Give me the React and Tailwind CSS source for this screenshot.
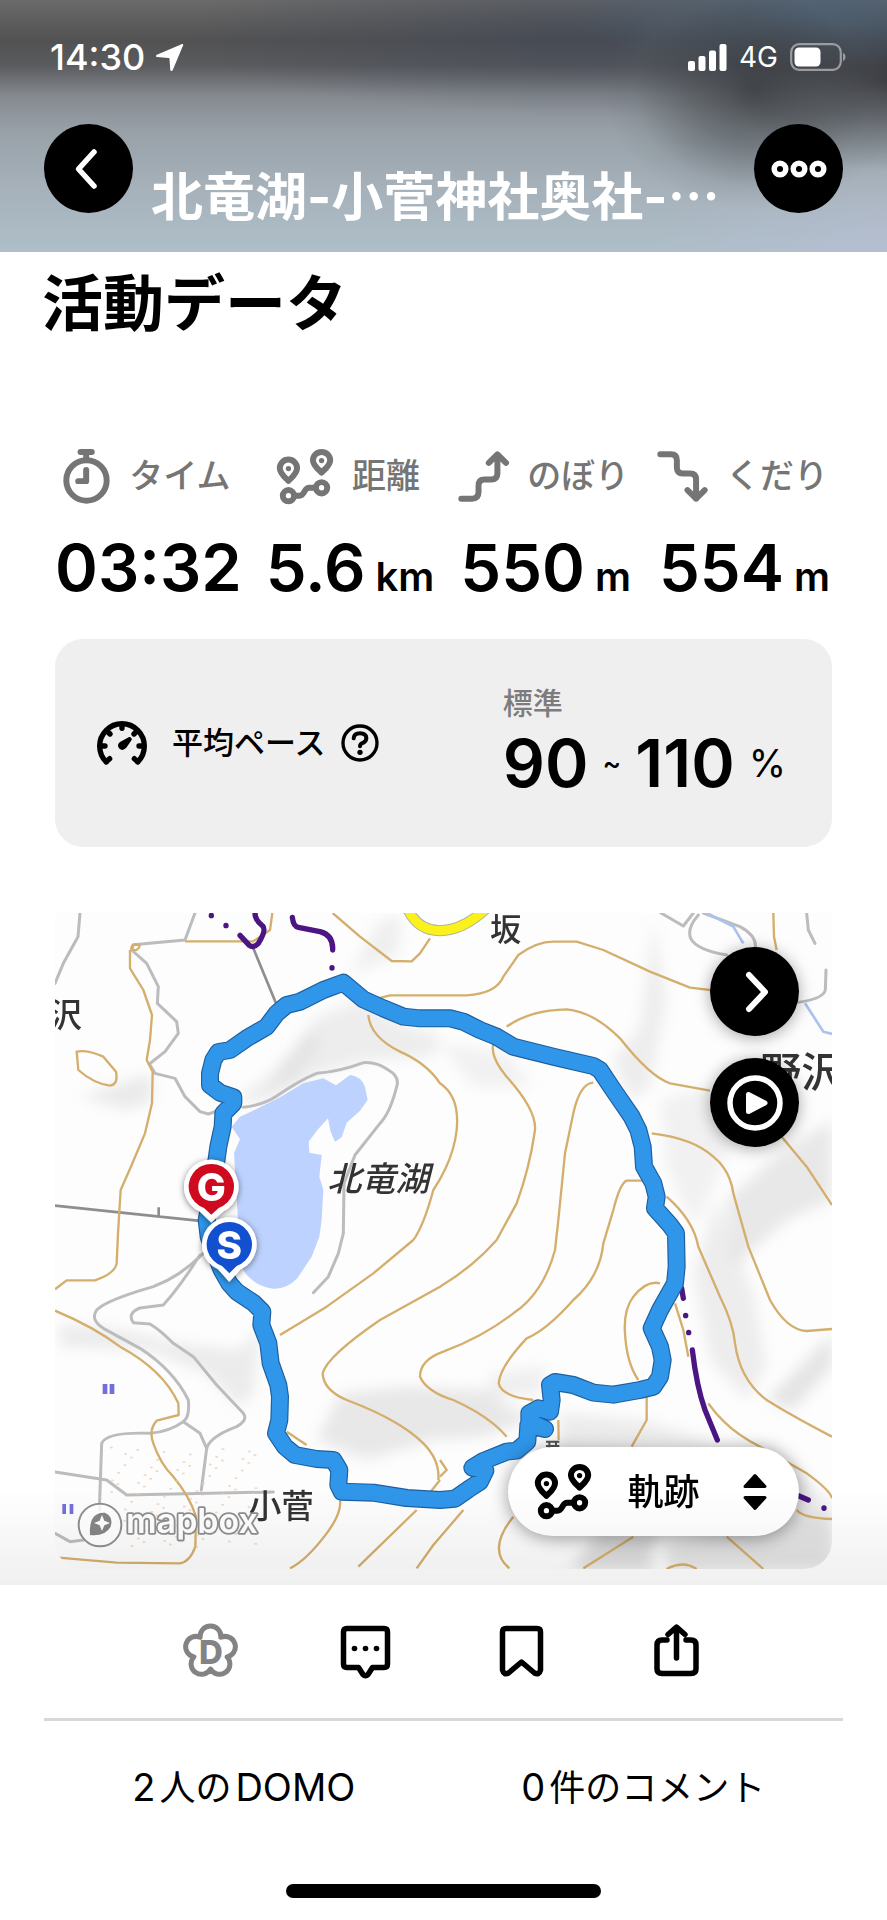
import React from "react";

function RouteIcon({ className }) {
  return (
    <svg viewBox="700 50 174 172" className={className} fill="none" stroke="currentColor" strokeWidth="18" strokeLinecap="round" strokeLinejoin="round" aria-hidden="true">
      <path d="M737 149C728 140 711 127 711 110a26 25 0 0 1 52 0C763 127 746 140 737 149Z" />
      <path d="M837 124C828 115 811 103 811 87a26 25 0 0 1 52 0C863 103 846 115 837 124Z" />
      <circle cx="737" cy="112" r="8" fill="currentColor" stroke="none" />
      <circle cx="837" cy="88" r="8" fill="currentColor" stroke="none" />
      <circle cx="737" cy="194" r="17" />
      <circle cx="837" cy="170" r="17" />
      <path d="M756 194h14c18 0 12-24 30-24h18" />
    </svg>
  );
}

function TimerIcon({ className }) {
  return (
    <svg viewBox="76 50 148 172" className={className} fill="none" stroke="currentColor" strokeWidth="18" strokeLinecap="round" strokeLinejoin="round" aria-hidden="true">
      <circle cx="150" cy="148" r="61" />
      <path d="M132 62h34M149 62v20M149 116v34h-24" />
    </svg>
  );
}

function ClimbIcon({ className }) {
  return (
    <svg viewBox="50 60 154 154" className={className} fill="none" stroke="currentColor" strokeWidth="18" strokeLinecap="round" strokeLinejoin="round" aria-hidden="true">
      <path d="M60 204H92Q112 204 112 184V165Q112 146 130 146H150Q169 146 169 128V72M143 96L169 70L195 96" />
    </svg>
  );
}

function DescendIcon({ className }) {
  return (
    <svg viewBox="646 60 154 154" className={className} fill="none" stroke="currentColor" strokeWidth="18" strokeLinecap="round" strokeLinejoin="round" aria-hidden="true">
      <path d="M656 70H688Q706 70 706 88V110Q706 128 724 128H746Q764 128 764 146V204M738 178L764 204L790 178" />
    </svg>
  );
}

function GaugeIcon({ className }) {
  return (
    <svg viewBox="48 52 156 138" className={className} fill="none" stroke="currentColor" strokeLinecap="round" strokeLinejoin="round" aria-hidden="true">
      <path strokeWidth="16" d="M79 178A67 67 0 1 1 173 178" />
      <path strokeWidth="16" d="M126 68v9M84 88l6 6M168 88l-6 6M66 130h9M186 130h-9M80 176l9-8M172 176l-9-8" />
      <path strokeWidth="7" fill="currentColor" d="M145 108q5-4 7 2l-16 23q-8 9-16 2q-6-8 3-15z" />
    </svg>
  );
}

function HelpIcon({ className }) {
  return (
    <svg viewBox="788 73 114 114" className={className} fill="none" stroke="currentColor" strokeLinecap="round" strokeLinejoin="round" aria-hidden="true">
      <circle cx="845" cy="130" r="51" strokeWidth="10" />
      <path strokeWidth="12" d="M826 116q1-15 19-15q18 0 19 14q0 9-9 14q-10 4-10 11" />
      <circle cx="845" cy="158" r="8" fill="currentColor" stroke="none" />
    </svg>
  );
}

function StatusBar() {
  return (
    <div className="flex h-28 items-center justify-between pt-[2px] pr-10 pl-[50px] text-white">
      <div className="flex items-center gap-[10px]">
        <span className="text-[36px] leading-10 font-medium">14:30</span>
        <svg viewBox="0 0 30 30" className="size-[29px]" fill="currentColor" aria-label="位置情報">
          <path d="M27.5 1.2c1.3-.6 2 .2 1.500 1.500L18.400 28c-.6 1.400-2.400 1.300-2.600-.3L15 16.500c0-.8-.2-1-1-1L2.300 14.600c-1.600-.2-1.800-1.800-.4-2.500z" />
        </svg>
      </div>
      <div className="flex items-center gap-3">
        <svg viewBox="0 0 39 27" className="h-[27px] w-[39px]" fill="currentColor" aria-label="電波">
          <rect x="0" y="17" width="7" height="10" rx="2" />
          <rect x="10.500" y="12" width="7" height="15" rx="2" />
          <rect x="21" y="6.500" width="7" height="20.500" rx="2" />
          <rect x="31.500" y="0" width="7" height="27" rx="2" />
        </svg>
        <span className="text-[28px] leading-10">4G</span>
        <svg viewBox="0 0 57 28" className="h-7 w-[57px]" fill="none" aria-label="バッテリー">
          <rect x="1.200" y="1.200" width="49.600" height="25.600" rx="8" stroke="#9a9ca0" strokeWidth="2.200" />
          <rect x="4.500" y="4.500" width="26" height="19" rx="4.500" fill="#fff" />
          <path d="M53 10v8c3-.8 3.500-7 0-8z" fill="#9a9ca0" />
        </svg>
      </div>
    </div>
  );
}

function Header() {
  return (
    <header className="h-[252px] bg-[radial-gradient(ellipse_150px_120px_at_85%_36%,rgba(52,55,59,0.75),rgba(62,66,70,0.45)_45%,rgba(90,96,102,0.12)_80%,transparent),radial-gradient(ellipse_260px_60px_at_92%_4%,rgba(74,98,122,0.75),transparent),radial-gradient(ellipse_400px_80px_at_66%_14%,rgba(60,68,84,0.55),transparent),radial-gradient(ellipse_240px_90px_at_100%_100%,rgba(184,190,212,0.7),transparent),radial-gradient(ellipse_160px_90px_at_100%_32%,rgba(42,42,46,0.75),transparent),linear-gradient(180deg,#6a6a6a_0%,#525253_16%,#5a5b5e_26%,#85898f_38%,#98a1a8_52%,#a6b1ba_75%,#aebfc9_100%)]">
      <StatusBar />
      <div className="flex items-start gap-[18px] px-11 pt-3">
        <button type="button" aria-label="戻る" className="flex size-[89px] shrink-0 items-center justify-center rounded-full bg-black text-white">
          <svg viewBox="3 0 24 42" className="h-[42px] w-6 overflow-visible" fill="none" stroke="currentColor" strokeWidth="5.500" strokeLinecap="round" strokeLinejoin="round">
            <path d="M20 4L4.500 21L20 38" />
          </svg>
        </button>
        <h1 className="min-w-0 flex-1 truncate pt-9 text-[52px] leading-[76px] font-bold text-white">北竜湖-小菅神社奥社-⋯</h1>
        <button type="button" aria-label="メニュー" className="flex size-[89px] shrink-0 items-center justify-center rounded-full bg-black text-white">
          <svg viewBox="0 0 56 18" className="h-[18px] w-14" fill="none" stroke="currentColor" strokeWidth="5.500">
            <circle cx="9" cy="9" r="5.800" />
            <circle cx="28" cy="9" r="5.800" />
            <circle cx="47" cy="9" r="5.800" />
          </svg>
        </button>
      </div>
    </header>
  );
}

function Stat({ icon, label, value, unit }) {
  return (
    <div className="flex flex-col items-center">
      <dt className="flex h-14 items-center gap-[18px] pr-1 text-[34px] leading-10 font-medium text-[#757575]">
        {icon}
        {label}
      </dt>
      <dd className="mt-6 flex items-baseline gap-[10px] text-[65px] leading-[80px] font-semibold text-black">
        {value}
        {unit && <span className="text-[40px]">{unit}</span>}
      </dd>
    </div>
  );
}

const ROUTE =
  "M520 850L500 960L506 1010L545 1110L568 1150L590 1175L640 1208L667 1235L664 1275L685 1330L692 1390L715 1455L720 1490L718 1560L708 1600L735 1640L765 1665L830 1677L880 1680L898 1710L895 1755L905 1775L1000 1778L1100 1794L1200 1800L1245 1796L1285 1768L1320 1745L1336 1712L1297 1703L1330 1683L1400 1655L1430 1652L1462 1625L1465 1575L1515 1587L1468 1565L1468 1540L1495 1525L1530 1535L1535 1500L1530 1455L1545 1446L1600 1455L1660 1478L1720 1484L1800 1470L1840 1460L1860 1430L1868 1380L1860 1340L1835 1285L1860 1230L1905 1150L1910 1100L1908 1000L1890 975L1845 925L1850 890L1840 850L1812 800L1808 740L1795 690L1775 650L1720 570L1680 510L1660 498L1540 470L1420 440L1370 410L1320 390L1270 365L1230 355L1140 355L1090 350L1030 325L970 298L910 248L850 270L780 305L740 315L710 340L680 380L620 415L570 450L535 456L520 480L510 520L510 555L540 578L580 592L580 610L550 640L548 680L535 740L520 850";

function MapDrawing() {
  return (
    <svg viewBox="45 39 2331 1968" className="block h-auto w-full rounded-b-[28px] bg-[#fdfdfd]" role="img" aria-label="活動ルートの地図">
      <defs>
        <filter id="soft" x="-30%" y="-30%" width="160%" height="160%">
          <feGaussianBlur stdDeviation="20" />
        </filter>
        <filter id="pin" x="-50%" y="-50%" width="200%" height="200%">
          <feDropShadow dx="0" dy="4" stdDeviation="10" floodOpacity="0.5" />
        </filter>
      </defs>

      <g fill="#b9b9bc" opacity="0.5" filter="url(#soft)">
        <path d="M600 580L700 530L830 350L960 300L1100 380L1200 400L1180 470L980 480L840 520L690 600L620 610Z" opacity=".45" />
        <path d="M660 560L800 400L850 420L760 540Z" opacity=".5" />
        <path d="M120 590L330 520L340 600L260 630Z" opacity=".55" />
        <path d="M930 220L1020 60L1090 50L1070 170Z" opacity=".4" />
        <path d="M1200 430L1400 460L1480 560L1300 560Z" opacity=".35" />
        <path d="M1720 480L1800 380L1840 60L1880 300L1830 560L1770 600Z" opacity=".45" />
        <path d="M1860 600L2010 560L2080 700L2020 860L1960 980L1880 800Z" opacity=".35" />
        <path d="M2060 900L2220 760L2376 660L2376 900L2240 960L2080 1100Z" opacity=".6" />
        <path d="M1960 1120L2030 900L2140 1180L2180 1400L2120 1500L2010 1380Z" opacity=".45" />
        <path d="M2180 1500L2376 1300L2376 1400L2260 1530Z" opacity=".7" />
        <path d="M60 1270L250 1290L420 1330L600 1350L660 1280L640 1480L600 1520L500 1420L320 1350L60 1340Z" opacity=".5" />
        <path d="M830 1620L900 1480L1080 1460L1320 1470L1480 1560L1330 1610L1180 1620L980 1680Z" opacity=".6" />
        <path d="M1560 1540L1800 1560L2020 1620L1560 1640Z" opacity=".5" />
        <path d="M1360 1420L1520 1400L1500 1480L1320 1500Z" opacity=".4" />
        <path d="M1590 2007L1680 1900L1850 1900L1830 2007Z" />
        <path d="M1860 1940L2000 1900L2150 1860L2376 1840L2376 2007H1900Z" opacity=".8" />
        <path d="M2120 1640L2200 1640L2376 1820L2300 1880L2180 1850Z" opacity=".5" />
      </g>

      <path fill="#bdd2fe" d="M600 650L660 622L720 592L790 550L850 535L888 556L930 525Q965 530 975 560L983 600L960 632L920 668L905 712L885 725L872 695L864 655L832 690L806 725L808 758L845 765L838 830L850 870L845 960L838 1010L815 1070L772 1135Q740 1168 700 1166Q640 1158 610 1110L590 1060L575 1000L594 960L588 860L582 760L600 718L575 680Z" />

      <g fill="none" stroke="#bcbcbf" strokeWidth="9" strokeLinejoin="round" strokeLinecap="round">
        <path d="M120 39L114 110L70 190L45 250" />
        <path d="M465 39L435 120L280 134L275 150L320 190L355 260L352 310L410 365L415 400L375 455L328 492L345 520L405 535L435 590L480 635L505 642L540 630" />
        <path d="M610 622Q670 615 710 588Q780 540 830 520Q900 515 970 488Q1010 485 1045 510Q1080 530 1070 560Q1050 640 1020 670L945 765L912 850L910 1000L895 1060L865 1130L820 1178" />
        <path d="M490 1060Q420 1130 340 1160Q200 1200 170 1230Q150 1260 190 1285L300 1345Q400 1410 445 1500Q450 1550 430 1565Q390 1595 330 1600Q200 1595 185 1630L178 1830" />
        <path d="M480 1065Q420 1160 370 1215L300 1224Q260 1240 280 1268L330 1272Q360 1290 400 1330L460 1370L530 1455L610 1540Q625 1560 590 1580Q510 1610 500 1645L484 1770" />
        <path d="M430 1565L480 1600L500 1645" />
        <path d="M45 1716L200 1740L260 1785L700 1776" />
        <path d="M45 1900L90 1925L130 1920" />
        <path d="M1863 39L1930 78L1960 39M1975 45Q1940 85 1952 115Q1970 150 2060 165M1990 39L2100 80Q2155 110 2145 150" />
        <path d="M2300 39L2305 90L2325 130M2358 210L2356 270Q2350 300 2250 310" />
      </g>
      <path fill="none" stroke="#8e8e8e" strokeWidth="8" d="M640 145L708 310M45 917L530 968M356 922v28" />
      <path fill="none" stroke="#a9c2ee" strokeWidth="8" d="M2000 39L2080 80L2110 130M2295 310L2350 395L2376 402" />

      <g fill="none" stroke="#d4ae6c" strokeWidth="7" strokeLinejoin="round">
        <path d="M697 39L690 90L640 124H435M300 136q-25-8-26 10q18 12 26-10M270 150V205L310 270L336 345L330 420L320 480L338 515L336 610L315 700L275 795L242 870L234 1000L230 1090Q225 1120 165 1141H80L45 1168" />
        <path d="M110 455Q140 448 190 470L228 515Q235 555 210 557Q160 550 115 510Z" />
        <path d="M45 1232Q160 1280 240 1340Q370 1410 415 1510L416 1545L350 1562Q325 1590 340 1630Q360 1690 400 1730Q450 1790 468 1850L466 1940Q450 1985 420 1990L230 1988L55 1973" />
        <path d="M878 39L960 110L1055 183L1115 184L1140 160L1170 115" />
        <path d="M1015 295L1050 286H1280Q1370 280 1390 230L1435 165Q1490 125 1540 125H1610L1690 150L1830 215L1950 263L2010 270" />
        <path d="M985 345Q990 410 1080 455Q1160 490 1200 550Q1260 590 1250 690Q1240 780 1180 870Q1150 980 1120 1020" />
        <path d="M1400 380Q1470 330 1580 328Q1660 335 1740 415Q1830 530 1890 550L2010 572" />
        <path d="M1360 430Q1350 470 1400 530Q1490 630 1485 690Q1470 800 1430 910L1370 1020Q1300 1100 1200 1160L1020 1260Q860 1370 848 1420Q850 1470 920 1500Q1080 1560 1150 1630Q1200 1680 1195 1740" />
        <path d="M1120 1020L1000 1120L860 1220L720 1305" />
        <path d="M1660 548Q1620 550 1600 640L1575 760L1555 960L1545 1050Q1510 1180 1420 1240Q1330 1310 1210 1355Q1140 1380 1140 1430Q1160 1475 1240 1500Q1350 1550 1400 1610" />
        <path d="M1810 842H1760Q1740 850 1720 930L1690 1030Q1680 1130 1600 1200Q1520 1290 1460 1315Q1380 1400 1376 1450Q1385 1490 1480 1500M1555 1560L1556 1620" />
        <path d="M1860 1150Q1820 1140 1780 1190Q1750 1230 1755 1300Q1760 1390 1795 1440M1820 1490V1560L1775 1640" />
        <path d="M1835 700Q1960 715 2020 770Q2070 810 2080 880L2125 1040L2190 1200Q2240 1290 2300 1293L2376 1287" />
        <path d="M1880 890Q1960 960 1975 1040L2040 1190Q2080 1270 2085 1330Q2100 1440 2180 1500Q2260 1550 2376 1610" />
        <path d="M2225 710L2300 800L2376 915M2200 39L2202 110L2210 150M1905 1210L1930 1290L1945 1370" />
        <path d="M2005 1510Q2060 1590 2160 1640L2300 1720Q2370 1770 2376 1795M2270 1830Q2290 1855 2376 1857" />
        <path d="M740 1595L800 1635M900 1800Q905 1840 860 1900Q800 1980 750 2005M1130 1830L955 2000M1200 1740L1160 1790M1270 1830L1180 1935L1130 2005M1420 1850Q1340 1950 1408 2005M1780 1910L1630 2005M2060 1910L2170 2007M1880 2007Q1930 1980 1970 2007M1200 1680L1220 1710L1200 1730" />
      </g>

      <g fill="#eec9a4" opacity=".7">
        {[...Array(90).keys()].map((i) => (
          <rect key={i} x={210 + ((i * 137) % 450)} y={1640 + ((i * 71) % 300)} width="8" height="5" />
        ))}
      </g>

      <path d="M1100 20Q1130 92 1200 92Q1270 92 1345 20" fill="none" stroke="#b4b49c" strokeWidth="33" />
      <path d="M1100 20Q1130 92 1200 92Q1270 92 1345 20" fill="none" stroke="#fbf21c" strokeWidth="27" />

      <g fill="none" stroke="#4b1583" strokeWidth="16" strokeLinecap="round" strokeLinejoin="round">
        <path d="M645 39Q645 60 668 78Q680 90 655 130Q640 145 628 136L600 106M757 52Q760 80 775 82L840 95Q880 105 878 150M876 203v1M514 46v1M558 76v1" />
        <path d="M1925 1165L1930 1195M1937 1246v1M1946 1297v1M1957 1350Q1970 1460 1995 1530L2032 1620" />
        <path d="M2270 1785L2305 1800M2352 1824v1" />
      </g>

      <g fill="#5a55d6" opacity=".85">
        <rect x="188" y="1452" width="14" height="30" />
        <rect x="209" y="1452" width="14" height="30" />
        <rect x="67" y="1812" width="11" height="30" />
        <rect x="89" y="1812" width="11" height="30" />
      </g>
      <path fill="none" stroke="#555" strokeWidth="6" d="M1518 1625h40M1518 1638h40M1528 1622v30M1548 1622v30" />

      <g fill="#333" className="font-medium">
        <text x="28" y="380" fontSize="98">沢</text>
        <text x="1350" y="122" fontSize="94">坂</text>
        <text x="862" y="874" fontSize="102" fontStyle="italic">北竜湖</text>
        <text x="2160" y="560" fontSize="124">野沢</text>
        <text x="626" y="1854" fontSize="98">小菅</text>
      </g>

      <g fill="none" strokeLinejoin="round" strokeLinecap="round">
        <path d={ROUTE} stroke="#1d5f9f" strokeWidth="54" />
        <path d={ROUTE} stroke="#3096ea" strokeWidth="47" />
      </g>

      <g filter="url(#pin)">
        <path d="M514 968L480 935A82 82 0 1 1 548 935Z" fill="#fff" />
      </g>
      <path d="M514 944L492 924A68 68 0 1 1 536 924Z" fill="#cf0a1e" />
      <text x="514" y="902" fontSize="116" textAnchor="middle" className="font-extrabold" fill="#fff">G</text>
      <g filter="url(#pin)">
        <path d="M568 1146L534 1108A82 82 0 1 1 602 1108Z" fill="#fff" />
      </g>
      <path d="M568 1120L546 1098A68 68 0 1 1 590 1098Z" fill="#1250cf" />
      <text x="568" y="1076" fontSize="116" textAnchor="middle" className="font-extrabold" fill="#fff">S</text>

      <g stroke="#8f8f8f" fill="#fff">
        <circle cx="180" cy="1875" r="64" strokeWidth="6" fillOpacity=".85" />
        <path d="M150 1905Q145 1835 195 1838Q222 1850 212 1880Q195 1910 150 1905Z" fill="#858585" stroke="none" />
        <path d="M186 1845l7 17 17 7-17 7-7 17-7-17-17-7 17-7z" stroke="none" />
        <text x="258" y="1900" fontSize="102" strokeWidth="11" paintOrder="stroke" strokeLinejoin="round" className="font-semibold">mapbox</text>
      </g>
    </svg>
  );
}

function ActivityMap() {
  return (
    <section className="relative mt-[66px]" aria-label="地図">
      <MapDrawing />
      <div className="absolute top-[34px] right-[33px] flex flex-col gap-[22px]">
        <button type="button" aria-label="地図を開く" className="flex size-[89px] items-center justify-center rounded-full bg-black text-white shadow-[0_2px_16px_rgba(0,0,0,0.35)]">
          <svg viewBox="0 0 24 42" className="h-[42px] w-6 overflow-visible" fill="none" stroke="currentColor" strokeWidth="6" strokeLinecap="round" strokeLinejoin="round">
            <path d="M6 4L22 21L6 38" />
          </svg>
        </button>
        <button type="button" aria-label="再生" className="flex size-[89px] items-center justify-center rounded-full bg-black text-white shadow-[0_2px_16px_rgba(0,0,0,0.35)]">
          <svg viewBox="0 0 56 56" className="size-14" fill="none" stroke="currentColor" strokeWidth="5.500" strokeLinejoin="round">
            <circle cx="28" cy="28" r="25" />
            <path d="M21.500 19.500V36.500L38 28Z" fill="currentColor" strokeWidth="5" />
          </svg>
        </button>
      </div>
      <button type="button" className="absolute right-[33px] bottom-[33px] flex h-[89px] w-[291px] items-center justify-between rounded-full bg-white pr-8 pl-[26px] text-black shadow-[0_2px_18px_rgba(0,0,0,0.4)]">
        <RouteIcon className="h-[57px] w-[58px]" />
        <span className="pr-2 text-[36px] leading-10 font-medium">軌跡</span>
        <svg viewBox="0 0 24 38" className="h-[38px] w-6" fill="currentColor" stroke="currentColor" strokeWidth="3" strokeLinejoin="round" aria-hidden="true">
          <path d="M12 2.500L22 13.500H2Z" />
          <path d="M12 35.500L22 24.500H2Z" />
        </svg>
      </button>
    </section>
  );
}

function Footer() {
  return (
    <footer className="relative bg-white text-black">
      <div className="pointer-events-none absolute inset-x-0 bottom-full h-24 bg-linear-to-b from-transparent to-black/6" />
      <div className="grid grid-cols-4 px-[15%] pt-[38px] pb-[39px]">
        <button type="button" aria-label="DOMOを送る" className="flex justify-center text-[#838383]">
          <svg viewBox="0 0 55 56" className="h-14 w-[55px]" fill="none" stroke="currentColor" strokeWidth="5" strokeLinejoin="round">
            <path d="M17.200 14.300A10.350 10.350 0 1 1 37.800 14.300A10.350 10.350 0 1 1 44.100 33.900A10.350 10.350 0 1 1 27.500 46A10.350 10.350 0 1 1 10.900 33.900A10.350 10.350 0 1 1 17.200 14.300Z" />
            <text x="28" y="40.500" fontSize="33" textAnchor="middle" fill="currentColor" stroke="none" className="font-extrabold">D</text>
          </svg>
        </button>
        <button type="button" aria-label="コメント" className="flex justify-center">
          <svg viewBox="0 0 55 56" className="h-14 w-[55px]" fill="none" stroke="currentColor" strokeWidth="5.500" strokeLinejoin="round">
            <path d="M9 5.500H46Q49.500 5.500 49.500 9V41Q49.500 44.500 46 44.500H34.500L30 51.500Q27.500 54 25 51.500L20.500 44.500H9Q5.500 44.500 5.500 41V9Q5.500 5.500 9 5.500Z" />
            <g fill="currentColor" stroke="none">
              <circle cx="16.500" cy="25.500" r="2.800" />
              <circle cx="27.500" cy="25.500" r="2.800" />
              <circle cx="38.500" cy="25.500" r="2.800" />
            </g>
          </svg>
        </button>
        <button type="button" aria-label="保存" className="flex justify-center">
          <svg viewBox="0 0 55 56" className="h-14 w-[55px]" fill="none" stroke="currentColor" strokeWidth="5.500" strokeLinejoin="round">
            <path d="M12 5.500H43Q46.500 5.500 46.500 9V47Q45 52.500 40.500 50L27.500 39L14.500 50Q10 52.500 8.500 47V9Q8.500 5.500 12 5.500Z" />
          </svg>
        </button>
        <button type="button" aria-label="共有" className="flex justify-center">
          <svg viewBox="0 0 55 56" className="h-14 w-[55px]" fill="none" stroke="currentColor" strokeWidth="5.500" strokeLinecap="round" strokeLinejoin="round">
            <path d="M18 17H13Q8 17 8 22V46Q8 50.500 13 50.500H42Q47 50.500 47 46V22Q47 17 42 17H37M27.500 35V4.500M19 11.500L27.500 4L36 11.500" />
          </svg>
        </button>
      </div>
      <hr className="mx-11 border-t-[3px] border-[#d8d8d8]" />
      <div className="mx-11 grid grid-cols-2 pt-10 text-[36px] leading-[52px]">
        <a href="#domo" className="flex items-baseline justify-center gap-1">
          <span className="text-[38px]">2</span>
          <span>人の</span>
          <span className="text-[38px]">DOMO</span>
        </a>
        <a href="#comments" className="flex items-baseline justify-center gap-1">
          <span className="text-[38px]">0</span>
          <span>件のコメント</span>
        </a>
      </div>
      <div className="mx-auto mt-[70px] mb-[22px] h-[14px] w-[315px] rounded-full bg-black" />
    </footer>
  );
}

export default function App() {
  return (
    <div className="min-h-screen bg-white font-['Inter','Noto_Sans_CJK_JP',sans-serif]" lang="ja">
      <Header />
      <main>
        <h2 className="px-[42px] pt-2 text-[61px] leading-[88px] font-bold text-black">活動データ</h2>
        <div className="px-[55px] pb-4">
          <dl className="mt-[100px] flex justify-between">
            <Stat icon={<TimerIcon className="h-[57px] w-[49px]" />} label="タイム" value="03:32" />
            <Stat icon={<RouteIcon className="h-[57px] w-[58px]" />} label="距離" value="5.6" unit="km" />
            <Stat icon={<ClimbIcon className="size-[51px]" />} label="のぼり" value="550" unit="m" />
            <Stat icon={<DescendIcon className="size-[51px]" />} label="くだり" value="554" unit="m" />
          </dl>
          <section className="mt-[22px] flex h-[208px] items-center justify-between rounded-[28px] bg-[#efefef] pr-[46px] pl-[41px]">
            <div className="flex items-center gap-6 text-[31px] leading-10 font-medium text-black">
              <GaugeIcon className="h-[46px] w-[52px]" />
              <span className="flex items-center gap-4">
                平均ペース
                <button type="button" aria-label="平均ペースについて">
                  <HelpIcon className="size-[38px]" />
                </button>
              </span>
            </div>
            <div className="pt-1">
              <p className="text-[30px] leading-9 font-medium text-[#7c7c7c]">標準</p>
              <p className="flex items-center gap-[14px] text-[66px] leading-[84px] font-semibold text-black">
                90
                <span className="text-[28px] leading-9 font-medium">~</span>
                110
                <span className="text-[38px] leading-9 font-normal">%</span>
              </p>
            </div>
          </section>
          <ActivityMap />
        </div>
      </main>
      <Footer />
    </div>
  );
}
